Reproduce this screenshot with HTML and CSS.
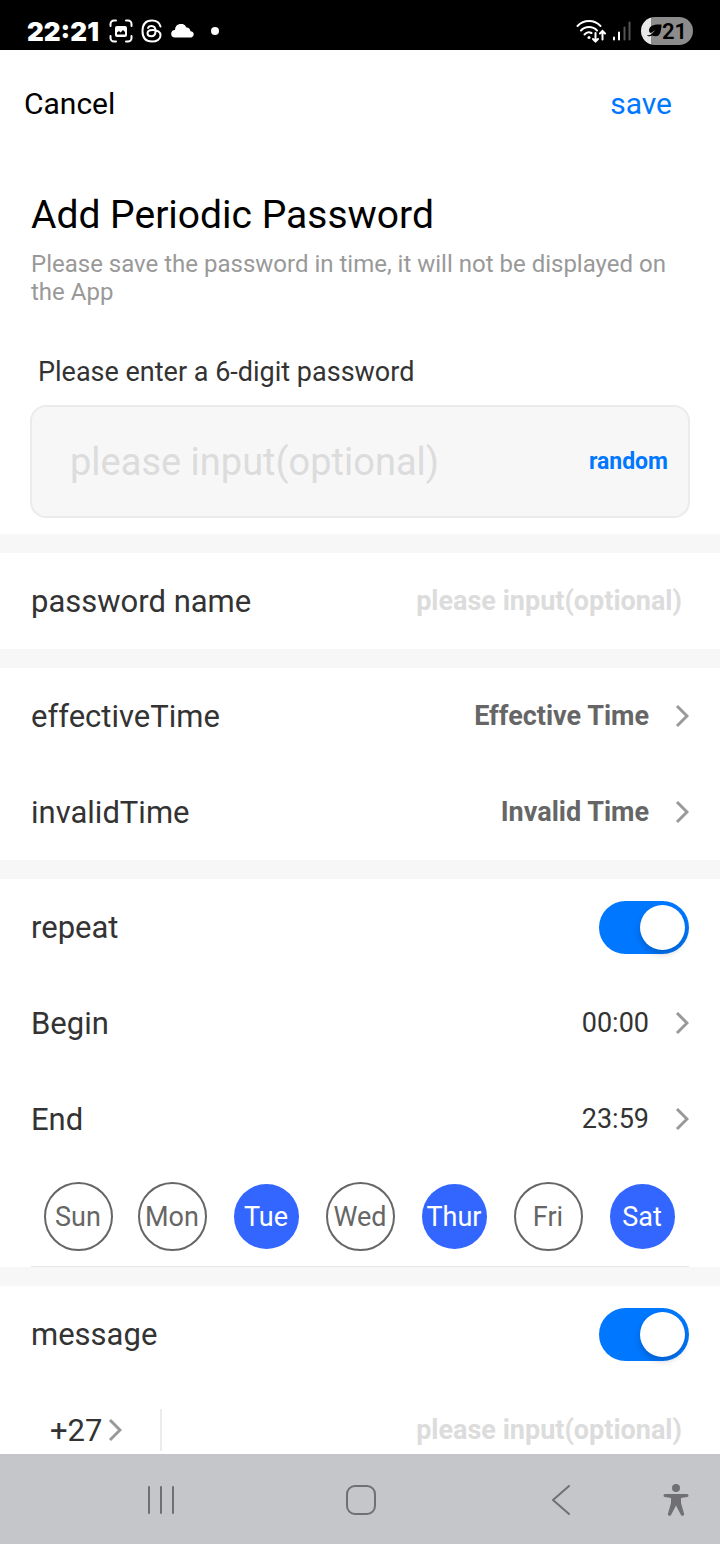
FILE: index.html
```html
<!DOCTYPE html>
<html lang="en">
<head>
    <meta charset="UTF-8">
    <meta name="viewport" content="width=device-width, initial-scale=1.0">
    <title>Add Periodic Password</title>
    <link rel="stylesheet" href="styles.css">
</head>
<body>
    <div class="status-bar">
        <span class="clock">22:21</span>
        <svg class="status-icon" width="24" height="24" viewBox="0 0 24 24" fill="none" stroke="#fff" stroke-width="2" stroke-linecap="round">
            <path d="M1.500 7V5a3.500 3.500 0 0 1 3.500-3.500h2M17 1.500h2A3.500 3.500 0 0 1 22.500 5v2M22.500 17v2a3.500 3.500 0 0 1-3.500 3.500h-2M7 22.500H5A3.500 3.500 0 0 1 1.500 19v-2"/>
            <rect x="6" y="7" width="12" height="11" rx="2" fill="#fff" stroke="none"/>
            <path d="M8 15.500v-2l2-1.500 1.500 1.500 2.500-2.500 2 2v2.500z" fill="#000" stroke="none"/>
        </svg>
        <svg class="status-icon threads" width="22" height="24" viewBox="0 0 22 24" fill="none" stroke="#fff" stroke-width="2" stroke-linecap="round">
            <path d="M19.500 7.500C18.500 3.500 15.500 1.500 11 1.500 4.500 1.500 1.500 5.500 1.500 12s3 10.500 9.500 10.500c5 0 8.500-2.500 8.500-6 0-4-4-5.500-8-5.500-3 0-5 1.300-5 3.300 0 1.900 1.600 3 3.700 3 2.800 0 4.300-1.800 4.300-5 0-3.500-1.500-5.300-4-5.300-1.700 0-2.900.700-3.500 1.900"/>
        </svg>
        <svg class="status-icon" width="24" height="14" viewBox="0 0 24 14" fill="#fff">
            <path d="M4 13.500a3.800 3.800 0 0 1 0-7.600A6 6 0 0 1 15.500 3.500a4.500 4.500 0 0 1 4 3.700 3.200 3.200 0 0 1 .8 6.300z"/>
        </svg>
        <span class="dot"></span>
        <div class="status-right">
            <svg width="30" height="24" viewBox="0 0 30 24" fill="none" stroke="#fff" stroke-width="2" stroke-linecap="round">
                <path d="M1.500 7a16 16 0 0 1 23 0M5 11.500a11 11 0 0 1 16 0M8.500 15.500a6 6 0 0 1 7-1.500"/>
                <circle cx="13" cy="18.500" r="1.500" fill="#fff" stroke="none"/>
                <path d="M19.500 14v8.500M17 20l2.500 2.500L22 20M26.500 20.500v-8.500M24 14.500l2.500-2.500L29 14.500"/>
            </svg>
            <svg width="19" height="20" viewBox="0 0 19 20" fill="none" stroke-width="2" stroke-linecap="round">
                <path d="M2 16.500v2M7 11.500v7" stroke="#fff"/>
                <path d="M12.500 6.500v12M17.500 1.500v17" stroke="#555"/>
            </svg>
            <div class="battery">
                <svg width="15" height="14" viewBox="0 0 15 14">
                    <path d="M14.500.5c-7-.5-12 1-12.500 5.500 0 1.500.5 2.500 1.500 3L8.500 6 5 9.800c-1.500 1-3 1.500-5 1.500.5 1 3 1.500 5 .2C9.500 13 12.500 12 13.500 8c.6-2 1-5 1-7.500z"/>
                </svg>
                21
            </div>
        </div>
    </div>

    <form class="app" id="passwordForm">
        <div class="toolbar">
            <button type="button" class="cancel">Cancel</button>
            <button type="submit" class="save">save</button>
        </div>

        <div class="intro">
            <h1>Add Periodic Password</h1>
            <p class="hint">Please save the password in time, it will not be displayed on the App</p>
            <label class="password-label" for="password">Please enter a 6-digit password</label>
            <div class="password-box">
                <input type="text" id="password" inputmode="numeric" maxlength="6" placeholder="please input(optional)">
                <button type="button" class="random">random</button>
            </div>
        </div>

        <div class="section">
            <div class="row">
                <label for="passwordName">password name</label>
                <input type="text" class="text-input" id="passwordName" placeholder="please input(optional)">
            </div>
        </div>

        <div class="section">
            <div class="row">
                <label for="effectiveTime">effectiveTime</label>
                <button type="button" class="picker unset" id="effectiveTime">Effective Time
                    <svg class="chevron" viewBox="0 0 14 24"><path d="M2 2l10 10L2 22"/></svg>
                </button>
            </div>
            <div class="row">
                <label for="invalidTime">invalidTime</label>
                <button type="button" class="picker unset" id="invalidTime">Invalid Time
                    <svg class="chevron" viewBox="0 0 14 24"><path d="M2 2l10 10L2 22"/></svg>
                </button>
            </div>
        </div>

        <div class="section">
            <div class="row">
                <label for="repeat">repeat</label>
                <input type="checkbox" class="switch" id="repeat" checked>
            </div>
            <div class="row">
                <label for="begin">Begin</label>
                <button type="button" class="picker" id="begin">00:00
                    <svg class="chevron" viewBox="0 0 14 24"><path d="M2 2l10 10L2 22"/></svg>
                </button>
            </div>
            <div class="row">
                <label for="end">End</label>
                <button type="button" class="picker" id="end">23:59
                    <svg class="chevron" viewBox="0 0 14 24"><path d="M2 2l10 10L2 22"/></svg>
                </button>
            </div>
            <div class="days">
                <label class="day"><input type="checkbox"><span>Sun</span></label>
                <label class="day"><input type="checkbox"><span>Mon</span></label>
                <label class="day"><input type="checkbox" checked><span>Tue</span></label>
                <label class="day"><input type="checkbox"><span>Wed</span></label>
                <label class="day"><input type="checkbox" checked><span>Thur</span></label>
                <label class="day"><input type="checkbox"><span>Fri</span></label>
                <label class="day"><input type="checkbox" checked><span>Sat</span></label>
            </div>
        </div>

        <div class="section">
            <div class="row">
                <label for="message">message</label>
                <input type="checkbox" class="switch" id="message" checked>
            </div>
            <div class="row phone-row">
                <button type="button" class="country-code">+27
                    <svg class="chevron" viewBox="0 0 14 24"><path d="M2 2l10 10L2 22"/></svg>
                </button>
                <input type="tel" class="text-input" id="phone" aria-label="Phone number" placeholder="please input(optional)">
            </div>
        </div>
    </form>

    <nav class="nav-bar">
        <button type="button" aria-label="Recent apps">
            <svg width="30" height="32" viewBox="0 0 30 32"><path d="M3 3v26M15 3v26M27 3v26"/></svg>
        </button>
        <button type="button" aria-label="Home">
            <svg width="32" height="32" viewBox="0 0 32 32"><rect x="2" y="2" width="28" height="28" rx="8"/></svg>
        </button>
        <button type="button" aria-label="Back">
            <svg width="20" height="32" viewBox="0 0 20 32"><path d="M18 2L2 16l16 14"/></svg>
        </button>
        <button type="button" class="accessibility" aria-label="Accessibility">
            <svg width="26" height="32" viewBox="0 0 26 32">
                <circle cx="13" cy="4" r="4"/>
                <path d="M2 10h22a1.500 1.500 0 0 1 0 3l-6 1v5l3 10.500a1.700 1.700 0 0 1-3.300 1L13 21.500l-4.700 9a1.700 1.700 0 0 1-3.300-1L8 19v-5l-6-1a1.500 1.500 0 0 1 0-3z"/>
            </svg>
        </button>
    </nav>
</body>
</html>
```
FILE: styles.css
```css
* {
    box-sizing: border-box;
}

body {
    font-family: Roboto, "Liberation Sans", sans-serif;
    background-color: #fff;
    color: #333;
    display: flex;
    flex-direction: column;
    height: 100vh;
    margin: 0;
}

button,
input {
    font-family: inherit;
    border: none;
    background: none;
    padding: 0;
    margin: 0;
}

button {
    cursor: pointer;
}

svg {
    display: block;
    flex-shrink: 0;
}

/* status bar */
.status-bar {
    display: flex;
    align-items: center;
    flex-shrink: 0;
    height: 50px;
    padding: 12px 27px 0;
    background: #000;
    color: #fff;
}

.clock {
    font-family: Inter, sans-serif;
    font-size: 26px;
    font-weight: 900;
    margin-right: 2px;
}

.status-icon {
    margin-left: 8px;
}

.dot {
    width: 8px;
    height: 8px;
    margin-left: 16px;
    border-radius: 50%;
    background: #fff;
}

.status-right {
    display: flex;
    align-items: center;
    gap: 6px;
    margin-left: auto;
}

.battery {
    display: flex;
    align-items: center;
    justify-content: center;
    width: 52px;
    height: 28px;
    margin-left: 4px;
    border-radius: 14px;
    background: linear-gradient(to right, #e8e8e8 10px, #8c8c8c 10px);
    color: #000;
    font-size: 22px;
    font-weight: 600;
}

/* form */
.app {
    flex: 1;
    min-height: 0;
    overflow-y: auto;
    scrollbar-width: none;
}

.toolbar {
    display: flex;
    justify-content: space-between;
    align-items: center;
    height: 106px;
    padding: 0 48px 0 24px;
}

.cancel,
.save {
    font-size: 30px;
    color: #000;
}

.save {
    color: #0077ff;
}

.intro {
    padding: 34px 30px 16px;
}

h1 {
    margin: 0 1px;
    font-size: 39px;
    line-height: 50px;
    font-weight: 400;
    color: #000;
}

.hint {
    margin: 10px 1px 48px;
    font-size: 24px;
    line-height: 28px;
    color: #999;
}

.password-label {
    display: block;
    padding-left: 8px;
    font-size: 27px;
    line-height: 36px;
}

.password-box {
    display: flex;
    align-items: center;
    height: 113px;
    margin-top: 15px;
    padding: 0 20px 0 38px;
    border: 2px solid #ebebeb;
    border-radius: 16px;
    background: #f7f7f7;
}

.password-box input {
    flex: 1;
    min-width: 0;
    font-size: 38px;
}

::placeholder {
    color: #dcdcdc;
    opacity: 1;
}

.random {
    font-size: 23px;
    font-weight: 700;
    color: #0077ff;
}

.section {
    border-top: 19px solid #f7f7f7;
}

.row {
    display: flex;
    justify-content: space-between;
    align-items: center;
    height: 96px;
    padding: 0 31px;
    font-size: 31px;
}

.text-input {
    flex: 1;
    min-width: 0;
    padding-right: 7px;
    font-size: 27px;
    font-weight: 700;
    text-align: right;
}

.picker {
    display: flex;
    align-items: center;
    gap: 26px;
    font-size: 27px;
    color: #333;
}

.unset {
    font-weight: 700;
    color: #666;
}

.chevron {
    width: 14px;
    height: 24px;
    fill: none;
    stroke: #999;
    stroke-width: 3;
}

.switch {
    appearance: none;
    display: flex;
    width: 90px;
    height: 53px;
    padding: 4px;
    border-radius: 27px;
    background: #ddd;
    cursor: pointer;
}

.switch::before {
    content: "";
    width: 45px;
    height: 45px;
    border-radius: 50%;
    background: #fff;
    box-shadow: 0 4px 6px rgba(0, 0, 0, 0.2);
}

.switch:checked {
    justify-content: flex-end;
    background: #0077ff;
}

/* weekday circles */
.days {
    display: grid;
    grid-template-columns: repeat(7, 1fr);
    align-items: center;
    height: 100px;
    margin: 0 31px;
    border-bottom: 1px solid #e5e5ea;
}

.day {
    display: flex;
    justify-content: center;
    font-size: 27px;
    color: #666;
    cursor: pointer;
}

.day input {
    appearance: none;
}

.day span {
    display: flex;
    align-items: center;
    justify-content: center;
    width: 69px;
    height: 69px;
    border: 2px solid #666;
    border-radius: 50%;
}

.day input:checked + span {
    width: 65px;
    height: 65px;
    border: none;
    background: #3366ff;
    color: #fff;
}

.phone-row {
    padding-left: 50px;
}

.country-code {
    display: flex;
    align-items: center;
    gap: 6px;
    height: 42px;
    padding-right: 38px;
    border-right: 2px solid #ebebeb;
    font-size: 31px;
    color: #333;
}

/* system navigation */
.nav-bar {
    display: grid;
    grid-template-columns: 20fr 20fr 20fr 3fr;
    align-items: center;
    flex-shrink: 0;
    height: 90px;
    padding: 2px 29px 0 61px;
    background: #c5c6ca;
}

.nav-bar button {
    display: flex;
    justify-content: center;
}

.nav-bar svg {
    fill: none;
    stroke: #707072;
    stroke-width: 2;
    stroke-linecap: round;
    stroke-linejoin: round;
}

.nav-bar .accessibility svg {
    fill: #707072;
    stroke: none;
}
```
